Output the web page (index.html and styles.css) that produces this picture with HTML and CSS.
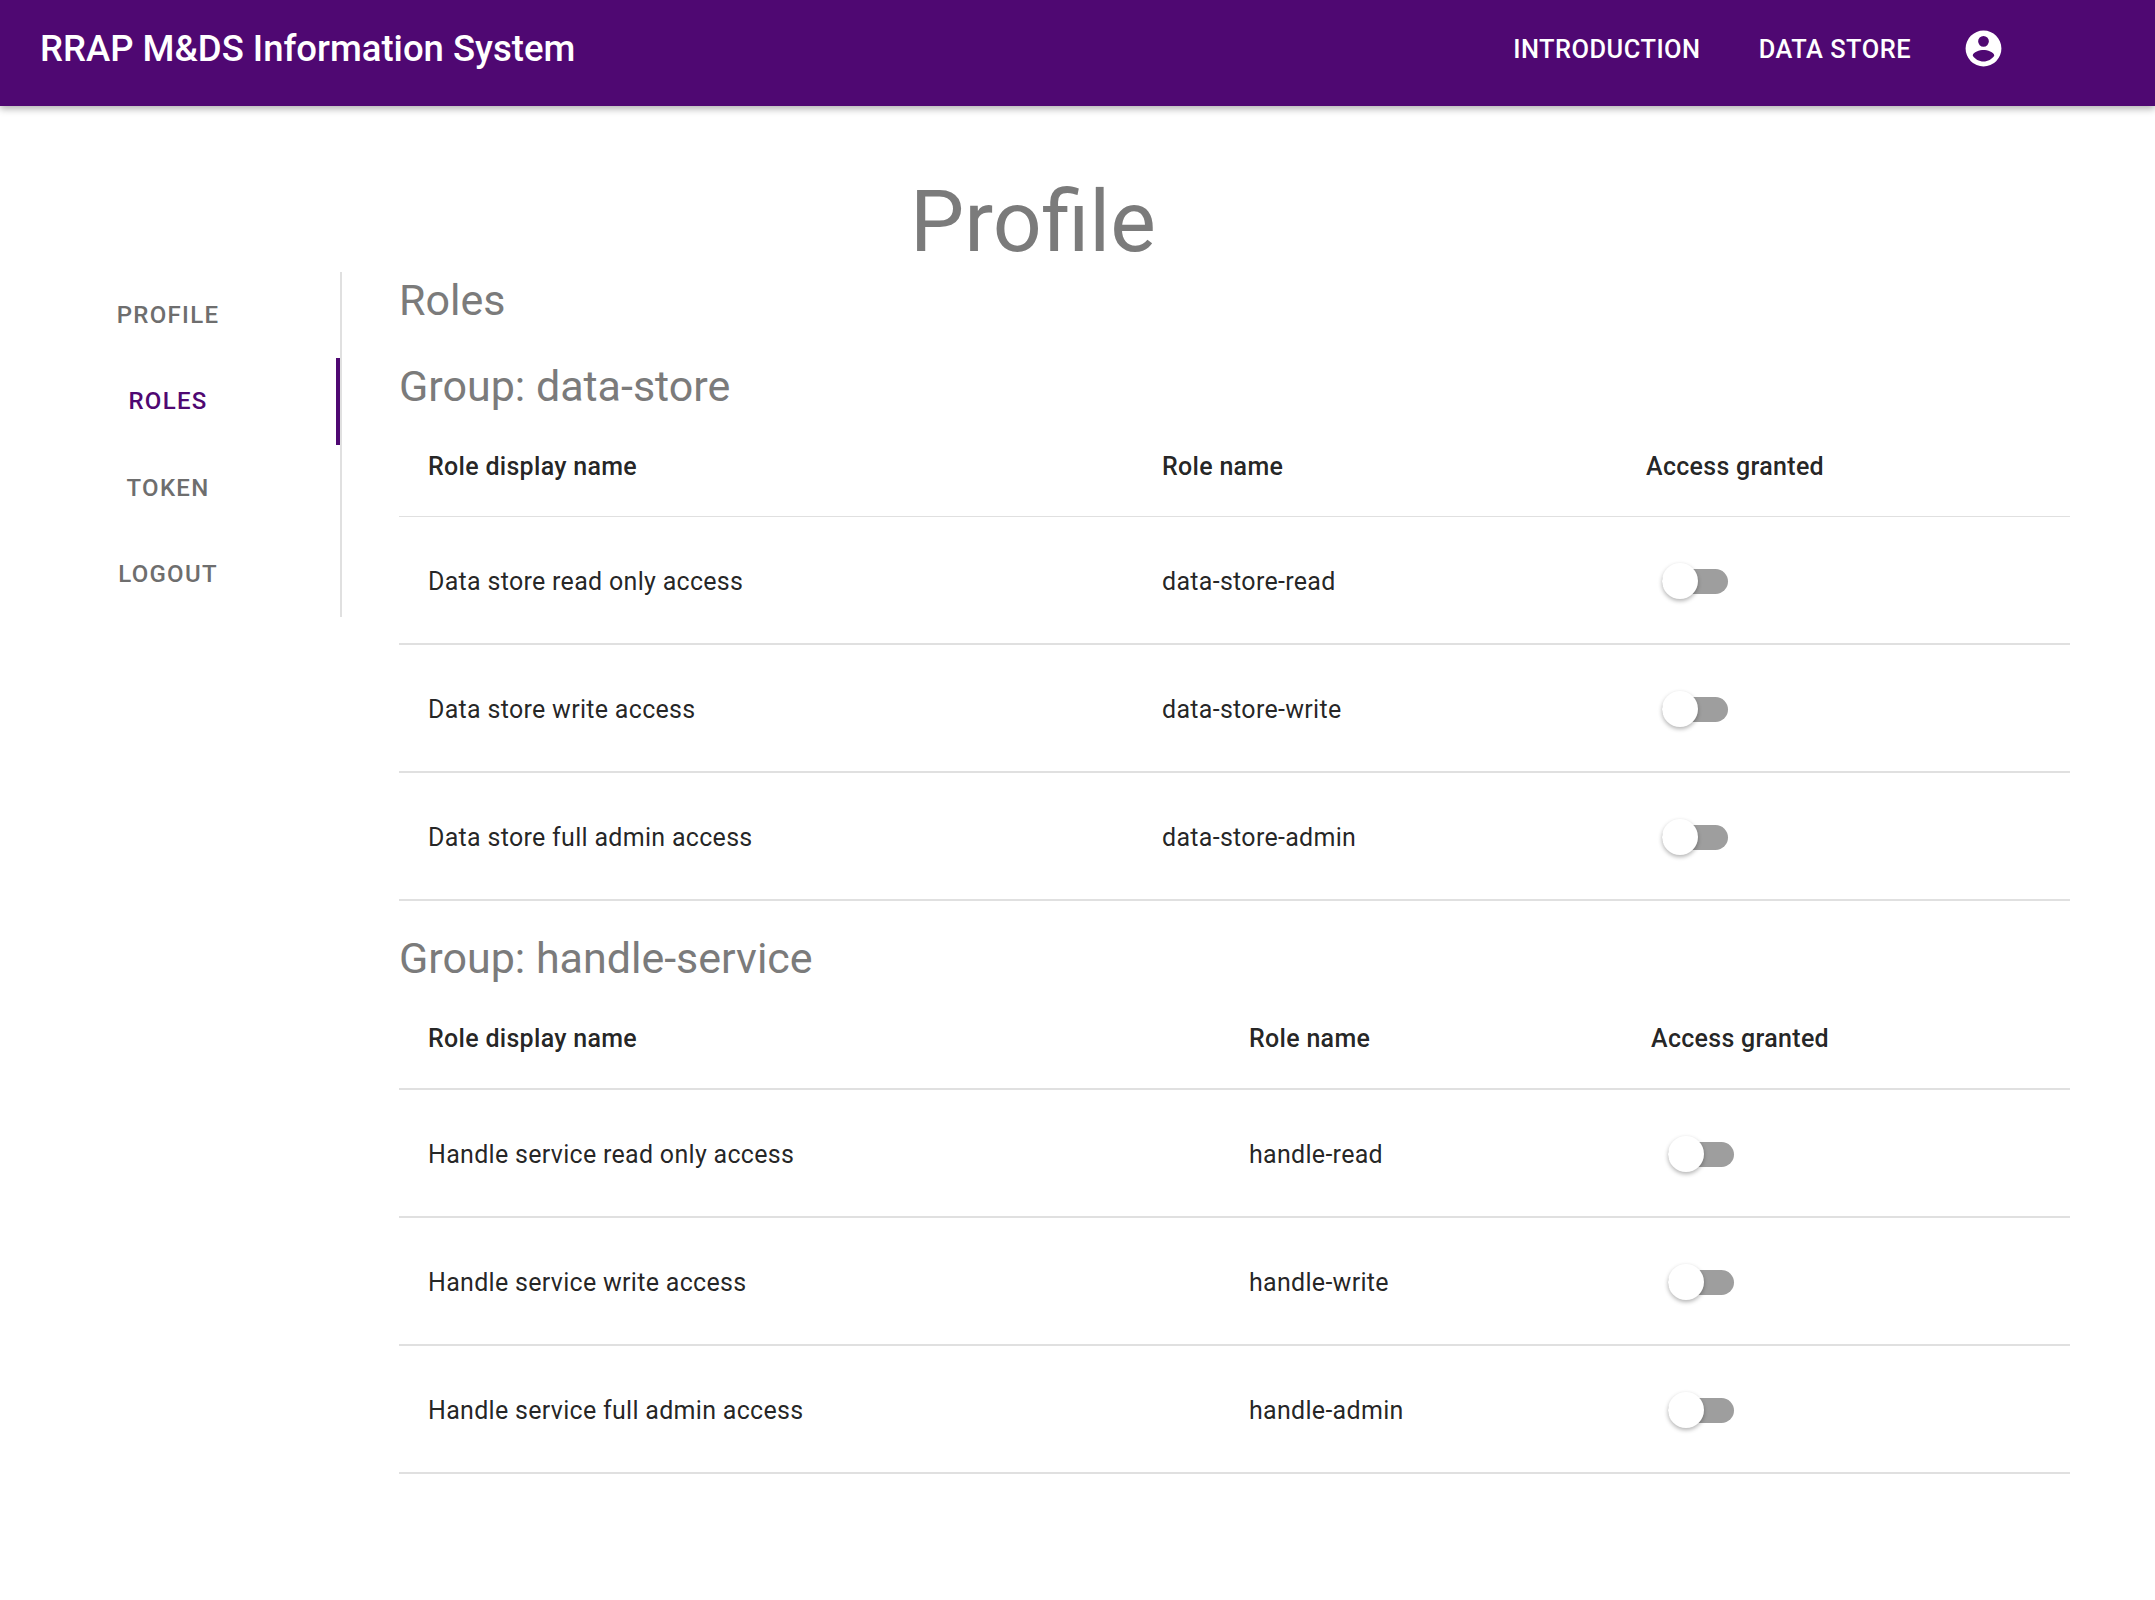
FILE: index.html
```html
<!DOCTYPE html>
<html lang="en">
<head>
    <meta charset="UTF-8">
    <title>Profile</title>
    <link rel="stylesheet" href="styles.css">
</head>
<body>
    <header class="app-bar">
        <div class="app-title">RRAP M&amp;DS Information System</div>
        <nav class="app-nav">
            <a class="nav-link">INTRODUCTION</a>
            <a class="nav-link">DATA STORE</a>
            <svg class="account-icon" viewBox="0 0 24 24"><path fill="#fff" d="M12,19.2C9.5,19.2 7.29,17.92 6,16C6.03,14 10,12.9 12,12.9C14,12.9 17.97,14 18,16C16.71,17.92 14.5,19.2 12,19.2M12,5A3,3 0 0,1 15,8A3,3 0 0,1 12,11A3,3 0 0,1 9,8A3,3 0 0,1 12,5M12,2A10,10 0 0,0 2,12A10,10 0 0,0 12,22A10,10 0 0,0 22,12C22,6.47 17.5,2 12,2Z"/></svg>
        </nav>
    </header>

    <main class="page">
        <h1 class="page-title">Profile</h1>
        <div class="layout">
            <div class="tabs">
                <div class="tab">PROFILE</div>
                <div class="tab active">ROLES</div>
                <div class="tab">TOKEN</div>
                <div class="tab">LOGOUT</div>
            </div>
            <section class="content">
                <h2 class="section-title">Roles</h2>

                <h3 class="group-title">Group: data-store</h3>
                <table class="roles roles-store">
                    <thead>
                        <tr><th>Role display name</th><th>Role name</th><th>Access granted</th></tr>
                    </thead>
                    <tbody>
                        <tr><td>Data store read only access</td><td>data-store-read</td><td><span class="switch"></span></td></tr>
                        <tr><td>Data store write access</td><td>data-store-write</td><td><span class="switch"></span></td></tr>
                        <tr><td>Data store full admin access</td><td>data-store-admin</td><td><span class="switch"></span></td></tr>
                    </tbody>
                </table>

                <h3 class="group-title">Group: handle-service</h3>
                <table class="roles roles-handle">
                    <thead>
                        <tr><th>Role display name</th><th>Role name</th><th>Access granted</th></tr>
                    </thead>
                    <tbody>
                        <tr><td>Handle service read only access</td><td>handle-read</td><td><span class="switch"></span></td></tr>
                        <tr><td>Handle service write access</td><td>handle-write</td><td><span class="switch"></span></td></tr>
                        <tr><td>Handle service full admin access</td><td>handle-admin</td><td><span class="switch"></span></td></tr>
                    </tbody>
                </table>
            </section>
        </div>
    </main>
</body>
</html>
```

FILE: styles.css
```css
body {
    margin: 0;
    font-family: Roboto, "Liberation Sans", sans-serif;
    background: #fff;
    color: rgba(0, 0, 0, 0.87);
}

.app-bar {
    height: 106px;
    box-sizing: border-box;
    background: #4f0872;
    display: flex;
    align-items: center;
    justify-content: space-between;
    padding: 0 150px 9px 40px;
    box-shadow: 0 3px 7px rgba(0, 0, 0, 0.3);
    position: relative;
    color: #fff;
}

.app-title {
    font-size: 36.5px;
    font-weight: 500;
}

.app-nav {
    display: flex;
    align-items: center;
    gap: 58px;
}

.nav-link {
    font-size: 25.4px;
    font-weight: 500;
    letter-spacing: 0.5px;
}

.account-icon {
    width: 43px;
    height: 43px;
    margin-left: -7px;
}

.page {
    padding-bottom: 120px;
}

.page-title {
    margin: 0;
    padding-right: 89px;
    height: 166px;
    text-align: center;
    font-size: 86px;
    font-weight: 400;
    line-height: 231px;
    color: #7b7b7b;
}

.layout {
    display: flex;
    padding-right: 85px;
}

.tabs {
    width: 340px;
    height: 345px;
    border-right: 2px solid #e0e0e0;
    flex-shrink: 0;
}

.tab {
    height: 86.3px;
    line-height: 86.3px;
    text-align: center;
    font-size: 24px;
    font-weight: 500;
    letter-spacing: 1.3px;
    color: #6e6e6e;
    padding-right: 4px;
}

.tab.active {
    color: #4f0872;
    border-right: 4px solid #4f0872;
    padding-right: 0;
}

.content {
    flex: 1;
    margin-left: 57px;
}

.section-title {
    margin: 0 0 29px;
    font-size: 43px;
    font-weight: 400;
    line-height: 56px;
    color: #7b7b7b;
}

.group-title {
    margin: 0;
    font-size: 43px;
    font-weight: 400;
    line-height: 58px;
    color: #7b7b7b;
}

.roles {
    width: 100%;
    border-collapse: collapse;
    table-layout: fixed;
    margin-bottom: 28px;
}

.roles th, .roles td {
    padding: 0 0 0 29px;
    text-align: left;
    font-size: 25px;
    letter-spacing: 0.3px;
    border-bottom: 2px solid #e0e0e0;
}

.roles th {
    height: 100px;
    padding-top: 1px;
    font-weight: 500;
}

.roles-store th {
    border-bottom-width: 1px;
}

.roles td {
    height: 124px;
    padding-top: 2px;
}

.roles-store th:nth-child(1) { width: 705px; }
.roles-store th:nth-child(2) { width: 455px; }
.roles-handle th:nth-child(1) { width: 792px; }
.roles-handle th:nth-child(2) { width: 373px; }

.switch {
    display: block;
    position: relative;
    width: 66px;
    height: 25px;
    border-radius: 13px;
    background: #9e9e9e;
    margin-left: 16px;
}

.roles-handle .switch {
    margin-left: 17px;
}

.switch::after {
    content: "";
    position: absolute;
    left: 0;
    top: -6px;
    width: 36px;
    height: 36px;
    border-radius: 50%;
    background: #fff;
    box-shadow: 0 2px 4px rgba(0, 0, 0, 0.3);
}
```
